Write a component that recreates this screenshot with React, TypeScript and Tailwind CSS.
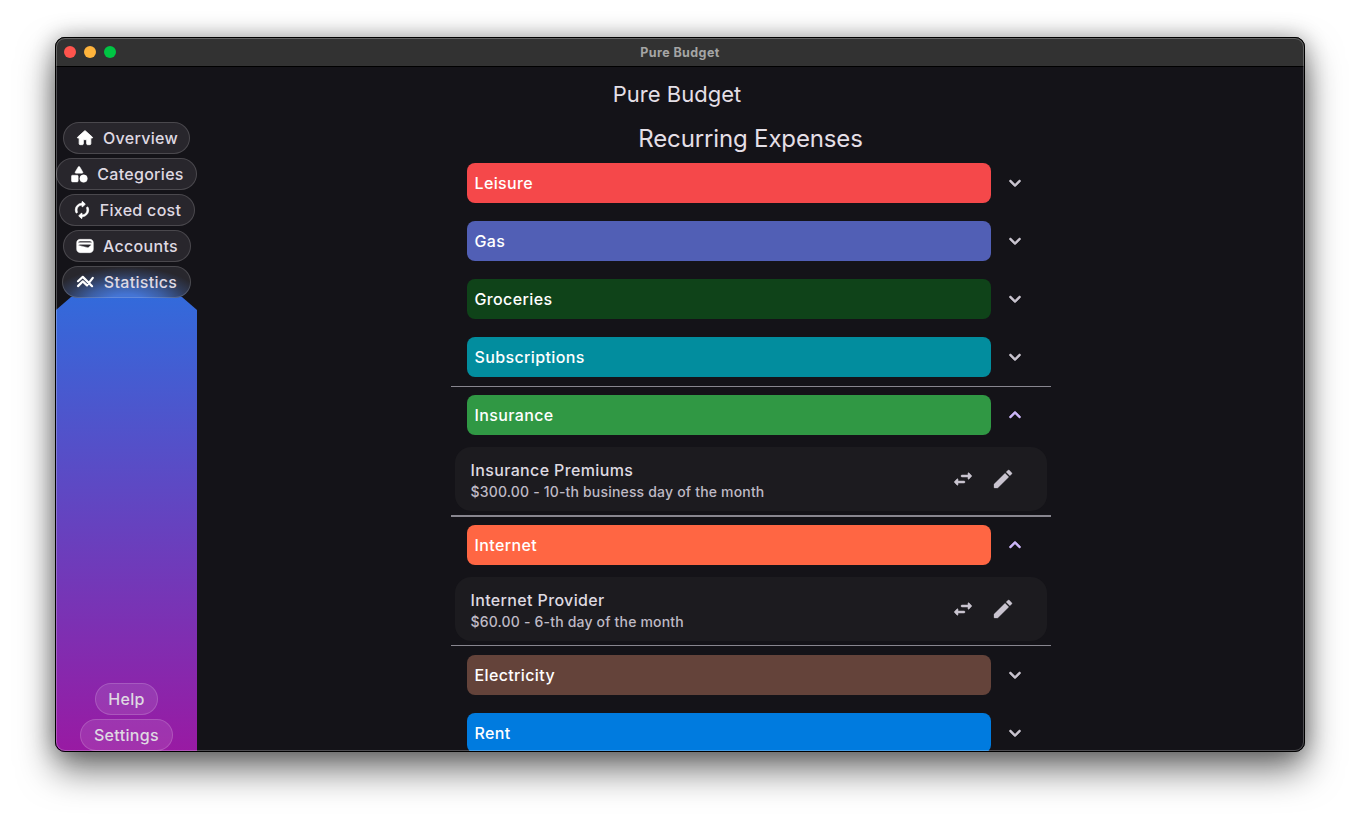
import React from 'react';

type IconProps = { d: string; className: string; stroke?: number };
const Icon = ({ d, className, stroke = 0 }: IconProps) => (
  <svg viewBox="0 0 24 24" fill="currentColor" stroke="currentColor" strokeWidth={stroke} className={className}>
    <path d={d} />
  </svg>
);

const HOME = 'M10 19v-5h4v5c0 .55.45 1 1 1h3c.55 0 1-.45 1-1v-7h1.7c.46 0 .68-.57.33-.87L12.67 3.6c-.38-.34-.96-.34-1.34 0l-8.36 7.53c-.34.3-.13.87.33.87H5v7c0 .55.45 1 1 1h3c.55 0 1-.45 1-1z';
const CATEGORY = 'M11.15 3.4 7.43 9.48c-.41.66.07 1.52.85 1.52h7.43c.78 0 1.26-.86.85-1.52L12.85 3.4c-.39-.64-1.31-.64-1.7 0zM17.5 13a4.5 4.5 0 1 0 0 9 4.5 4.5 0 0 0 0-9zM4 21.5h6c.55 0 1-.45 1-1v-6c0-.55-.45-1-1-1H4c-.55 0-1 .45-1 1v6c0 .55.45 1 1 1z';
const RENEW = 'M12 6v1.79c0 .45.54.67.85.35l2.79-2.79c.2-.2.2-.51 0-.71l-2.79-2.79c-.31-.31-.85-.09-.85.36V4c-4.42 0-8 3.58-8 8 0 1.04.2 2.04.57 2.95.27.67 1.13.85 1.64.34.27-.27.38-.68.23-1.04C6.15 13.56 6 12.79 6 12c0-3.31 2.69-6 6-6zm5.79 2.71c-.27.27-.38.69-.23 1.04.28.7.44 1.46.44 2.25 0 3.31-2.69 6-6 6v-1.79c0-.45-.54-.67-.85-.35l-2.79 2.79c-.2.2-.2.51 0 .71l2.79 2.79c.31.31.85.09.85-.35V20c4.42 0 8-3.58 8-8 0-1.04-.2-2.04-.57-2.95-.27-.67-1.13-.85-1.64-.34z';
const WALLET = 'M18 4H6C3.79 4 2 5.79 2 8v8c0 2.21 1.79 4 4 4h12c2.21 0 4-1.79 4-4V8c0-2.21-1.79-4-4-4zm-1.86 9.77c-.24.2-.57.28-.88.2L4.15 11.25C4.45 10.52 5.16 10 6 10h12c.67 0 1.26.34 1.63.84l-3.49 2.93zM6 6h12c1.1 0 2 .9 2 2v.55c-.59-.34-1.27-.55-2-.55H6c-.73 0-1.41.21-2 .55V8c0-1.1.9-2 2-2z';
const EDIT = 'M3 17.46v3.04c0 .28.22.5.5.5h3.04c.13 0 .26-.05.35-.15L17.81 9.94l-3.75-3.75L3.15 17.1c-.1.1-.15.22-.15.36zM20.71 7.04a.996.996 0 0 0 0-1.41l-2.34-2.34a.996.996 0 0 0-1.41 0l-1.83 1.83 3.75 3.75 1.83-1.83z';
const SWAP = 'M6.14 11.86l-2.78 2.79c-.19.2-.19.51 0 .71l2.78 2.79c.31.32.85.09.85-.35V16H13c.55 0 1-.45 1-1s-.45-1-1-1H6.99v-1.79c0-.45-.54-.67-.85-.35zm14.51-3.21l-2.78-2.79c-.31-.32-.85-.09-.85.35V8H11c-.55 0-1 .45-1 1s.45 1 1 1h6.01v1.79c0 .45.54.67.85.35l2.78-2.79c.2-.19.2-.51.01-.7z';
const DOWN = 'M8.12 9.29 12 13.17l3.88-3.88c.39-.39 1.02-.39 1.41 0s.39 1.02 0 1.41l-4.59 4.59c-.39.39-1.02.39-1.41 0L6.7 10.7c-.39-.39-.39-1.02 0-1.41.39-.38 1.03-.39 1.42 0z';

const StatsIcon = () => (
  <svg viewBox="0 0 20 20" fill="none" stroke="currentColor" strokeWidth="2.2" strokeLinecap="round" strokeLinejoin="round" className="size-5">
    <path d="M2 9.2 6.8 4.9l9.3 9.3M2 14.1 6.8 9.4l4.2 4 5.8-7.6" />
  </svg>
);

const nav = [
  { label: 'Overview', width: 'w-[127px]', icon: <Icon d={HOME} stroke={1} className="size-5" /> },
  { label: 'Categories', width: 'w-[141px]', icon: <Icon d={CATEGORY} stroke={0.6} className="size-5" /> },
  { label: 'Fixed cost', width: 'w-[136px]', icon: <Icon d={RENEW} stroke={0.9} className="size-5" /> },
  { label: 'Accounts', width: 'w-[128px]', icon: <Icon d={WALLET} stroke={0.6} className="size-5" /> },
  { label: 'Statistics', width: 'w-[129px]', icon: <StatsIcon />, glow: true },
];

type Group = { name: string; color: string; item?: { name: string; detail: string }; line?: string };
const groups: Group[] = [
  { name: 'Leisure', color: 'bg-[#f5484a]' },
  { name: 'Gas', color: 'bg-[#515fb5]' },
  { name: 'Groceries', color: 'bg-[#0f4319]' },
  { name: 'Subscriptions', color: 'bg-[#028d9e]' },
  { name: 'Insurance', color: 'bg-[#309844]', line: 'top-0 border-t', item: { name: 'Insurance Premiums', detail: '$300.00 - 10-th business day of the month' } },
  { name: 'Internet', color: 'bg-[#ff6643]', line: '-top-px border-t-2', item: { name: 'Internet Provider', detail: '$60.00 - 6-th day of the month' } },
  { name: 'Electricity', color: 'bg-[#64433a]', line: '-top-px border-t' },
  { name: 'Rent', color: 'bg-[#007bdf]' },
];

function ExpenseGroup({ group }: { group: Group }) {
  return (
    <div className="relative">
      {group.line && <div className={`absolute inset-x-0 border-[#88868f] ${group.line}`} />}
      <div className="flex h-[58px] items-center pl-4">
        <div className={`flex h-10 w-[524px] items-center rounded-lg pl-2 text-base font-medium tracking-[0.37px] text-white ${group.color}`}>
          {group.name}
        </div>
        <Icon d={DOWN} stroke={0.6} className={`ml-3 size-6 ${group.item ? 'rotate-180 text-[#cdb7fa]' : 'text-[#c9c4cf]'}`} />
      </div>
      {group.item && (
        <div className="px-1 pt-[3px] pb-[5px]">
          <div className="flex h-16 items-center rounded-2xl bg-[#1c1b1f] pr-8 pl-4">
            <div className="flex-1 pt-0.5">
              <div className="text-base leading-6 font-medium tracking-[0.36px] text-[#dfdae1]">{group.item.name}</div>
              <div className="text-sm leading-5 font-medium tracking-[0.18px] text-[#bfbac5]">{group.item.detail}</div>
            </div>
            <div className="flex gap-4 text-[#c9c4cf]">
              <Icon d={SWAP} stroke={0.5} className="size-6" />
              <Icon d={EDIT} stroke={0.3} className="size-6" />
            </div>
          </div>
        </div>
      )}
    </div>
  );
}

export default function App() {
  return (
    <div className="h-[825px] w-[1360px] overflow-hidden bg-white px-[55px] pt-[37px] font-['Inter',sans-serif]">
      <div className="relative flex h-[715px] w-[1250px] flex-col rounded-[10px] bg-[#141318] shadow-[0_18px_36px_rgba(0,0,0,0.55),0_0_22px_rgba(0,0,0,0.3)]">
        <div className="pointer-events-none absolute inset-0 z-20 rounded-[10px] border border-black" />
        <div className="pointer-events-none absolute inset-px z-20 rounded-[9px] border border-white/25" />
        <header className="grid h-[30px] shrink-0 grid-cols-3 items-center rounded-t-[10px] border-b border-black bg-[#323232] px-[9px]">
          <div className="flex gap-2">
            <span className="size-3 rounded-full bg-[#ff544d]" />
            <span className="size-3 rounded-full bg-[#ffb43c]" />
            <span className="size-3 rounded-full bg-[#00c543]" />
          </div>
          <div className="pt-0.5 text-center text-[12.5px] leading-4 font-bold tracking-[0.42px] text-[#a5a5a5]">Pure Budget</div>
        </header>
        <div className="flex h-[55px] shrink-0 items-center justify-center pr-[6px] pb-px text-[22px] text-[#e4dfe6]">Pure Budget</div>
        <div className="flex h-[630px] overflow-hidden rounded-b-[10px] px-px">
          <aside className="relative flex w-[141px] shrink-0 flex-col items-center justify-between">
            <div className="absolute inset-x-0 top-[175px] bottom-0 bg-linear-to-b/srgb from-[#336adb] to-[#991aa3] [clip-path:polygon(15px_0,calc(100%-15px)_0,100%_13px,100%_100%,0_100%,0_13px)]" />
            <nav className="relative flex flex-col items-center gap-1">
              {nav.map((n) => (
                <div
                  key={n.label}
                  className={`flex h-8 items-center justify-center gap-2 rounded-full border border-white/16 text-base font-medium tracking-[0.3px] text-[#dfd9e2] ${n.width} ${n.glow ? 'bg-origin-border bg-[radial-gradient(ellipse_62%_115%_at_50%_118%,#4474d4_25%,#3c5ea3_50%,#303b57_78%,#28272d_100%)]' : 'bg-[#28262c]'}`}
                >
                  <span className="text-white">{n.icon}</span>
                  <span>{n.label}</span>
                </div>
              ))}
            </nav>
            <div className="relative flex flex-col items-center gap-1 pb-px text-base font-medium tracking-[0.35px] text-[#dfd9e2]">
              <div className="flex h-8 w-[63px] items-center justify-center rounded-full border border-white/16 bg-white/10">Help</div>
              <div className="flex h-8 w-[93px] items-center justify-center rounded-full border border-white/16 bg-white/10">Settings</div>
            </div>
          </aside>
          <main className="flex flex-1 flex-col items-center">
            <h1 className="h-8 pt-px text-2xl leading-8 tracking-[-0.14px] text-[#e4dfe6]">Recurring Expenses</h1>
            <div className="w-[600px]">
              {groups.map((g) => (
                <ExpenseGroup key={g.name} group={g} />
              ))}
            </div>
          </main>
        </div>
      </div>
    </div>
  );
}
